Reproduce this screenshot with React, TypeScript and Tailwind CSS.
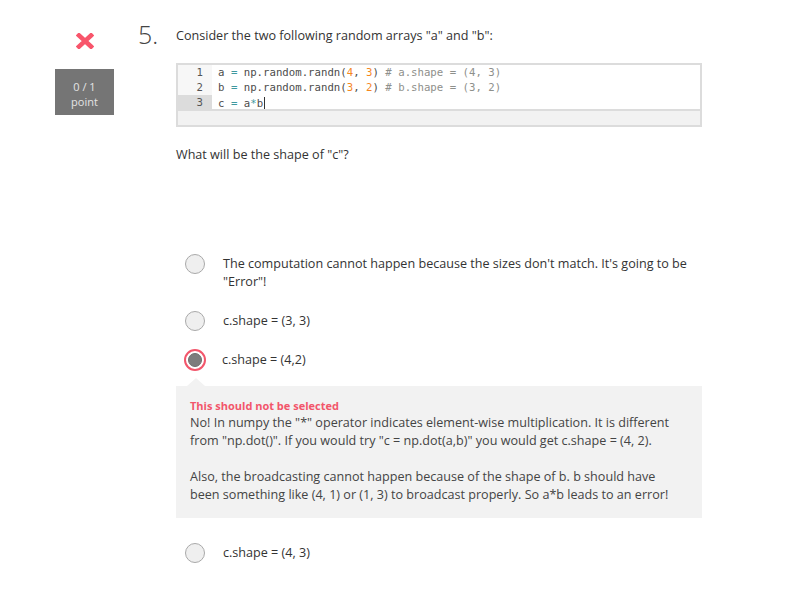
import React from "react";

const mono = { fontFamily: '"DejaVu Sans Mono", "Liberation Mono", monospace' };

function Radio({ selected }: { selected?: boolean }) {
  if (selected) {
    return (
      <div className="mt-[-2px] ml-[8px] flex h-[22px] w-[22px] shrink-0 items-center justify-center rounded-full border-2 border-[#f2566b] bg-white">
        <div className="h-[14px] w-[14px] rounded-full border border-[#6f6f6f] bg-[#7d7d7d]" />
      </div>
    );
  }
  return (
    <div className="mt-[-1px] ml-[9px] h-[20px] w-[20px] shrink-0 rounded-full border border-[#a9a9a9] bg-[#efefef]" />
  );
}

function Option({
  children,
  selected,
  className = "",
}: {
  children: React.ReactNode;
  selected?: boolean;
  className?: string;
}) {
  return (
    <div className={`flex h-[18px] items-start ${className}`}>
      <Radio selected={selected} />
      <div className={`${selected ? "ml-[16px]" : "ml-[18px]"} text-[12.6px] leading-[18px] text-[#333]`}>
        {children}
      </div>
    </div>
  );
}

const Op = ({ c }: { c: string }) => <span className="text-[#3e999f]">{c}</span>;
const Num = ({ c }: { c: string }) => <span className="text-[#f5871f]">{c}</span>;
const Cm = ({ c }: { c: string }) => <span className="text-[#8e908c]">{c}</span>;

function CodeBox() {
  const lines: React.ReactNode[] = [
    <>
      a <Op c="=" /> np.random.randn(<Num c="4" />, <Num c="3" />) <Cm c="# a.shape = (4, 3)" />
    </>,
    <>
      b <Op c="=" /> np.random.randn(<Num c="3" />, <Num c="2" />) <Cm c="# b.shape = (3, 2)" />
    </>,
    <>
      c <Op c="=" /> a<Op c="*" />b
      <span className="ml-[1px] inline-block h-[12px] w-px translate-y-[2px] bg-[#333]" />
    </>,
  ];
  return (
    <div className="mt-[18px] border-2 border-[#dcdcdc]">
      <div className="h-[44px] bg-white text-[10.7px] leading-[15px] text-[#4d4d4c]" style={mono}>
        {lines.map((l, i) => (
          <div key={i} className="flex">
            <div
              className={`w-[34px] shrink-0 pr-[9px] text-right text-[#555] ${
                i === 2 ? "bg-[#dcdcdc]" : "bg-[#f7f7f7]"
              }`}
            >
              {i + 1}
            </div>
            <div className="whitespace-pre pl-[6px]">{l}</div>
          </div>
        ))}
      </div>
      <div className="h-[16px] border-t-2 border-[#dcdcdc] bg-[#f2f2f2]" />
    </div>
  );
}

export default function App() {
  return (
    <div
      className="min-h-[594px] w-[790px] bg-white"
      style={{ fontFamily: '"Open Sans", "Noto Sans", sans-serif' }}
    >
      <div className="flex items-start pl-[55px]">
        {/* grade column */}
        <div className="flex w-[59px] shrink-0 flex-col items-center pt-[33px]">
          <svg width="18" height="16" viewBox="0 0 18 16">
            <path d="M3 2.5 L15 13.5 M15 2.5 L3 13.5" stroke="#f8556b" strokeWidth="4.6" strokeLinecap="square" />
          </svg>
          <div className="mt-[20px] flex h-[46px] w-[59px] flex-col items-center bg-[#757575] pt-[10px] text-[11px] leading-[15px] text-[#e4e4e4]">
            <span>0 / 1</span>
            <span>point</span>
          </div>
        </div>

        {/* number */}
        <div className="ml-[24px] w-[38px] shrink-0 pt-[22px] text-[25px] font-light leading-[25px] text-[#444]">
          5.
        </div>

        {/* question body */}
        <div className="w-[526px] pt-[27px]">
          <p className="text-[12.6px] leading-[18px] text-[#333]">
            Consider the two following random arrays "a" and "b":
          </p>
          <CodeBox />
          <p className="mt-[19px] text-[12.6px] leading-[18px] text-[#333]">
            What will be the shape of "c"?
          </p>

          <Option className="mt-[91px] !h-[36px]">
            The computation cannot happen because the sizes don't match. It's going to be
            <br />
            "Error"!
          </Option>
          <Option className="mt-[21px]">c.shape = (3, 3)</Option>
          <Option className="mt-[21px]" selected>
            c.shape = (4,2)
          </Option>

          {/* feedback */}
          <div className="relative mt-[17px] bg-[#f2f2f2] px-[14px] pt-[12px] pb-[14px]">
            <div className="absolute top-[-8px] left-[11px] h-0 w-0 border-x-[9px] border-b-[8px] border-x-transparent border-b-[#f2f2f2]" />
            <div className="text-[11px] font-bold leading-[16px] text-[#f2566b]">
              This should not be selected
            </div>
            <div className="text-[12.6px] leading-[18px] text-[#444]">
              No! In numpy the "*" operator indicates element-wise multiplication. It is different
              <br />
              from "np.dot()". If you would try "c = np.dot(a,b)" you would get c.shape = (4, 2).
              <br />
              <br />
              Also, the broadcasting cannot happen because of the shape of b. b should have
              <br />
              been something like (4, 1) or (1, 3) to broadcast properly. So a*b leads to an error!
            </div>
          </div>

          <Option className="mt-[26px]">c.shape = (4, 3)</Option>
        </div>
      </div>
    </div>
  );
}
